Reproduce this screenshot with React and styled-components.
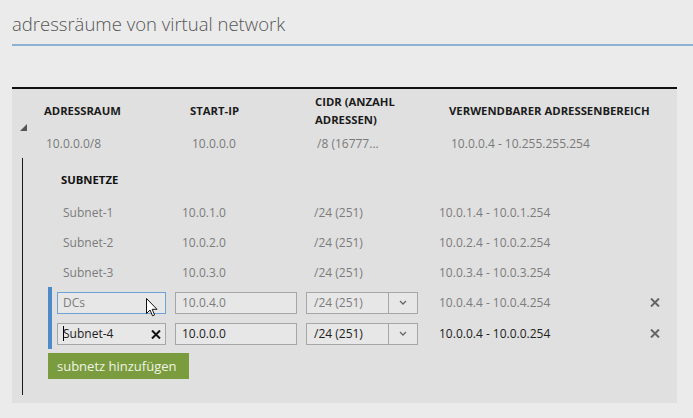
import React from 'react';
import styled, {createGlobalStyle} from 'styled-components';

const GlobalStyle = createGlobalStyle`
  html, body {
    margin: 0;
    padding: 0;
    background: #ebebeb;
  }
`;

const FONT = `"Open Sans", "Noto Sans", "Liberation Sans", sans-serif`;

const Page = styled.div`
  width: 693px;
  height: 418px;
  overflow: hidden;
  background: #ebebeb;
  font-family: ${FONT};
`;

const Heading = styled.header`
  margin-left: 12px;
  padding: 10px 0 6px 0;
  border-bottom: 2px solid #8fb1d1;
`;

const Title = styled.h1`
  margin: 0;
  font-size: 18.5px;
  font-weight: 300;
  line-height: 28px;
  color: #555;
`;

const Panel = styled.section`
  margin: 41px 16px 0 12px;
  background: #e0e0e0;
  border-top: 2px solid #111;
  padding-bottom: 8px;
`;

const TopGrid = styled.div`
  display: grid;
  grid-template-columns: 32px 146px 125px 134px 1fr;
  grid-template-rows: 36px 18px;
  row-gap: 6px;
  padding-top: 4px;
`;

const Toggle = styled.div`
  grid-column: 1;
  grid-row: 1 / span 2;
  padding: 31px 0 0 8px;
  line-height: 0;
`;

const HeadCell = styled.div`
  align-self: center;
  font-size: 11.3px;
  font-weight: 700;
  line-height: 18px;
  text-transform: uppercase;
  color: #1b1b1b;
`;

const ValueCell = styled.div`
  padding-left: 2px;
  font-size: 12px;
  line-height: 18px;
  color: #7a7a7a;
  white-space: nowrap;
`;

const SubTree = styled.div`
  margin: 5px 0 0 10px;
  border-left: 1px solid #1a1a1a;
  padding: 13px 0 16px 0;
`;

const SectionLabel = styled.div`
  margin: 0 0 8px 38px;
  font-size: 11.3px;
  font-weight: 700;
  line-height: 18px;
  text-transform: uppercase;
  color: #111;
`;

const RowList = styled.div`
  margin-left: 25px;
  border-left: 4px solid ${p => (p.$editing ? '#4f8ac8' : 'transparent')};
  padding: 0 11px 0 5px;
`;

const Row = styled.div`
  display: grid;
  grid-template-columns: 118px 131px 133px 1fr 22px;
  align-items: center;
  height: ${p => (p.$editing ? 31 : 30)}px;
  font-size: 12px;
  color: ${p => (p.$dim ? '#7c7c7c' : '#222')};
`;

const Text = styled.span`
  padding-left: ${p => p.$indent || 0}px;
  white-space: nowrap;
`;

const Field = styled.div`
  position: relative;
  box-sizing: border-box;
  display: flex;
  align-items: center;
  width: ${p => p.$width}px;
  height: 22px;
  padding-left: ${p => p.$pad || 5}px;
  background: #e7e7e7;
  border: 1px solid ${p => (p.$focus ? '#6da2d6' : '#a6a6a6')};
  white-space: nowrap;
`;

const SelectBox = styled.div`
  box-sizing: border-box;
  display: flex;
  width: 112px;
  height: 22px;
  background: #e7e7e7;
  border: 1px solid #a6a6a6;
`;

const SelectValue = styled.div`
  flex: 1;
  display: flex;
  align-items: center;
  padding-left: 7px;
`;

const SelectArrow = styled.div`
  width: 28px;
  display: flex;
  align-items: center;
  justify-content: center;
  border-left: 1px solid #a6a6a6;
`;

const Caret = styled.span`
  display: inline-block;
  width: 1px;
  height: 15px;
  margin-right: -1px;
  background: #000;
`;

const ClearButton = styled.span`
  position: absolute;
  right: 4px;
  top: 6px;
  line-height: 0;
`;

const Pointer = styled.svg`
  position: absolute;
  left: 88px;
  top: 5px;
`;

const DeleteCell = styled.div`
  display: flex;
  justify-content: center;
`;

const AddButton = styled.button`
  display: block;
  box-sizing: border-box;
  margin: 4px 0 0 25px;
  width: 141px;
  height: 26px;
  padding: 0 0 0 9px;
  border: none;
  background: #7b9c3e;
  color: #eef3e4;
  font-family: ${FONT};
  font-size: 13px;
  text-align: left;
`;

const Cross = ({color = '#666', size = 10, weight = 2}) => (
    <svg width={size} height={size - 1} viewBox="0 0 10 9">
        <path d="M1 0.5 L9 8.5 M9 0.5 L1 8.5" stroke={color} strokeWidth={weight} />
    </svg>
);

const Chevron = () => (
    <svg width="8" height="5" viewBox="0 0 8 5">
        <path d="M1 1 L4 4 L7 1" fill="none" stroke="#666" strokeWidth="1.3" />
    </svg>
);

const subnets = [
    {name: 'Subnet-1', ip: '10.0.1.0', cidr: '/24 (251)', range: '10.0.1.4 - 10.0.1.254'},
    {name: 'Subnet-2', ip: '10.0.2.0', cidr: '/24 (251)', range: '10.0.2.4 - 10.0.2.254'},
    {name: 'Subnet-3', ip: '10.0.3.0', cidr: '/24 (251)', range: '10.0.3.4 - 10.0.3.254'},
];

export default function App() {
    return (
        <Page>
            <GlobalStyle/>
            <Heading>
                <Title>adressräume von virtual network</Title>
            </Heading>
            <Panel>
                <TopGrid>
                    <Toggle>
                        <svg width="7" height="7" viewBox="0 0 7 7">
                            <polygon points="7,0 7,7 0,7" fill="#555"/>
                        </svg>
                    </Toggle>
                    <HeadCell>Adressraum</HeadCell>
                    <HeadCell>Start-IP</HeadCell>
                    <HeadCell>CIDR (Anzahl<br/>Adressen)</HeadCell>
                    <HeadCell>Verwendbarer Adressenbereich</HeadCell>
                    <ValueCell>10.0.0.0/8</ValueCell>
                    <ValueCell>10.0.0.0</ValueCell>
                    <ValueCell>/8 (16777...</ValueCell>
                    <ValueCell>10.0.0.4 - 10.255.255.254</ValueCell>
                </TopGrid>

                <SubTree>
                    <SectionLabel>Subnetze</SectionLabel>
                    <RowList>
                        {subnets.map((s) => (
                            <Row key={s.name} $dim>
                                <Text $indent={6}>{s.name}</Text>
                                <Text $indent={7}>{s.ip}</Text>
                                <Text $indent={8}>{s.cidr}</Text>
                                <Text>{s.range}</Text>
                            </Row>
                        ))}
                    </RowList>
                    <RowList $editing>
                        <Row $editing $dim>
                            <Field $width={109} $focus>
                                DCs
                                <Pointer width="12" height="19" viewBox="0 0 12 19">
                                    <path d="M0.5 0.5 L0.5 15.5 L4 12 L6.5 17.8 L8.6 16.9 L6.2 11.3 L11 11.3 Z"
                                          fill="#fff" stroke="#111" strokeWidth="1" strokeLinejoin="round"/>
                                </Pointer>
                            </Field>
                            <Field $width={122} $pad={6}>10.0.4.0</Field>
                            <SelectBox>
                                <SelectValue>/24 (251)</SelectValue>
                                <SelectArrow><Chevron/></SelectArrow>
                            </SelectBox>
                            <Text>10.0.4.4 - 10.0.4.254</Text>
                            <DeleteCell><Cross/></DeleteCell>
                        </Row>
                        <Row $editing>
                            <Field $width={109}>
                                <Caret/>Subnet-4
                                <ClearButton><Cross color="#111" /></ClearButton>
                            </Field>
                            <Field $width={122} $pad={6}>10.0.0.0</Field>
                            <SelectBox>
                                <SelectValue>/24 (251)</SelectValue>
                                <SelectArrow><Chevron/></SelectArrow>
                            </SelectBox>
                            <Text>10.0.0.4 - 10.0.0.254</Text>
                            <DeleteCell><Cross/></DeleteCell>
                        </Row>
                    </RowList>
                    <AddButton>subnetz hinzufügen</AddButton>
                </SubTree>
            </Panel>
        </Page>
    );
}
